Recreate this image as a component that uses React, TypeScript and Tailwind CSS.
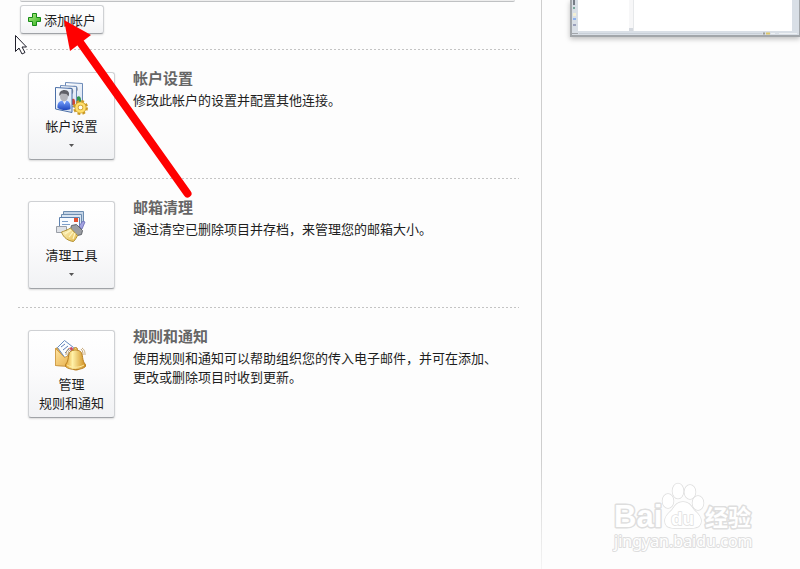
import type { ReactNode } from 'react';

const divider =
  'h-px bg-[repeating-linear-gradient(90deg,#c4c4c4_0px,#c4c4c4_2px,transparent_2px,transparent_4px)]';

const raised =
  'rounded-[3px] border border-[#cfd1d4] border-b-[#a0a3a7] bg-linear-to-b from-white via-[#fbfbfc] to-[#f1f2f4] shadow-[0_1px_2px_rgba(0,0,0,0.14)]';

function PlusIcon() {
  return (
    <svg width="14" height="14" viewBox="0 0 14 14" aria-hidden="true">
      <defs>
        <linearGradient id="plus" x1="0" y1="0" x2="1" y2="1">
          <stop offset="0" stopColor="#b5f08a" />
          <stop offset="1" stopColor="#2fae1c" />
        </linearGradient>
      </defs>
      <path d="M4.500 .5h4v4h4v4h-4v4h-4v-4h-4v-4h4z" fill="url(#plus)" stroke="#178a16" />
    </svg>
  );
}

function AccountsIcon() {
  return (
    <svg width="36" height="34" viewBox="1 0 36 34" aria-hidden="true">
      <defs>
        <linearGradient id="card" x1="0" y1="0" x2="1" y2="1">
          <stop offset="0" stopColor="#ffffff" />
          <stop offset="1" stopColor="#d5e0f1" />
        </linearGradient>
        <linearGradient id="shirt" x1="0" y1="0" x2="0" y2="1">
          <stop offset="0" stopColor="#79a4ff" />
          <stop offset="1" stopColor="#1d45bd" />
        </linearGradient>
      </defs>
      <path d="M12.500 1.500l17 1v22l-17-3z" fill="url(#card)" stroke="#6d8bb8" />
      <path d="M20 5c4-1 5 1 5 4l-2 3z" fill="#a4a8b0" />
      <path d="M24 16c2-2 4 0 4 3v3h-4z" fill="#33964c" />
      <path d="M7.500 4.500l16 1v21l-16-3z" fill="url(#card)" stroke="#6d8bb8" />
      <path d="M15 7c4-1 6 1 5 5l-2 3z" fill="#8a8f99" />
      <path d="M19 18c2-1 3 0 3 3v3h-3z" fill="#d04637" />
      <path d="M2.500 6.500l16.500 1v24l-16.500-3.500z" fill="url(#card)" stroke="#4b6fa8" />
      <path d="M4.500 27c-.5-5 2-7 5-7.500l2 1 2-1c3 1 4.500 4 4 8.500-4 2-10 1-13-1z" fill="url(#shirt)" />
      <path d="M9.500 19.500l2 4 2-4z" fill="#e9f0ff" />
      <ellipse cx="11" cy="15.500" rx="4" ry="5" fill="#b5b5ba" />
      <path d="M6.500 15c-1-4 2-6 5-6 4 0 5.500 3 4 6.500l-2-2.500-5-.5z" fill="#606066" />
      <circle cx="27.500" cy="26.500" r="6" fill="none" stroke="#cb9a26" strokeWidth="3" strokeDasharray="2.600 2.110" />
      <circle cx="27.500" cy="26.500" r="4" fill="#fffdf0" stroke="#cb9a26" strokeWidth="4" />
      <circle cx="27.500" cy="26.500" r="4" fill="none" stroke="#ffdf6b" strokeWidth="2.500" />
    </svg>
  );
}

function CleanupIcon() {
  return (
    <svg width="36" height="34" viewBox="1 0 36 34" aria-hidden="true">
      <defs>
        <linearGradient id="straw" x1="0" y1="0" x2="1" y2="1">
          <stop offset="0" stopColor="#fffbd0" />
          <stop offset="1" stopColor="#e5b948" />
        </linearGradient>
      </defs>
      <path d="M10.500 1.500h20v13h-20z" fill="#c4d4e6" stroke="#6d8db0" />
      <path d="M8.500 4.500h20v12h-20z" fill="#d9e5f2" stroke="#6d8db0" />
      <path d="M6.500 7.500h20v13h-20z" fill="#f8fbff" stroke="#5e82af" />
      <path d="M9 11.500h6M9 14.500h8" stroke="#7d9fca" />
      <path d="M21 8h4v4h-4z" fill="#e5502e" />
      <path d="M3.500 16.500h10v6h-10z" fill="#dfe2e7" stroke="#9a9fa7" />
      <path d="M26 16l4-5 2 1-3 7z" fill="#a3a2e0" stroke="#6869b4" strokeWidth=".8" />
      <path d="M18.500 15.500l5-1 6 6-1 4-4 1-7-6z" fill="#9a9da3" stroke="#62656b" />
      <path d="M17.500 18c-3 2-6 3-9 4 2 6 7 9 12 9.500 2-2 3-4 4-6z" fill="url(#straw)" stroke="#b39235" />
      <path d="M18 20l-6 4m8-2l-4 5m6-4l-2 6" stroke="#fff7c2" strokeWidth="1.200" />
    </svg>
  );
}

function RulesIcon() {
  return (
    <svg width="36" height="34" viewBox="1 0 36 34" aria-hidden="true">
      <defs>
        <linearGradient id="folder" x1="0" y1="0" x2="1" y2="1">
          <stop offset="0" stopColor="#ffe4a1" />
          <stop offset="1" stopColor="#e5ad46" />
        </linearGradient>
        <linearGradient id="bell" x1="0" y1="0" x2="1" y2="0">
          <stop offset="0" stopColor="#e2a02c" />
          <stop offset=".35" stopColor="#fff1a8" />
          <stop offset="1" stopColor="#cf8d1c" />
        </linearGradient>
      </defs>
      <path d="M2.500 9.500l8-3 10 7v14l-18-1z" fill="#e0ab50" stroke="#c3903f" />
      <path d="M4.500 8.500l7-7 9 7-8 11z" fill="#fafdff" stroke="#668cc0" />
      <path d="M8 8l4-3m-2 6l5-4m-3 7l4-4" stroke="#5f7db7" />
      <path d="M16 9l3-1 1 3-2 1z" fill="#cf4268" />
      <path d="M2.500 9.500l9 9 8-4v13l-17-1z" fill="url(#folder)" stroke="#d2a04d" />
      <path d="M15 16c0-3 1-5 3-6m-5 6c0-3 1-5 3-7m13 0c3 2 3 5 3 7m-4-6c2 2 2 4 2 6" fill="none" stroke="#bf9c62" strokeWidth=".9" />
      <ellipse cx="23" cy="28.500" rx="4" ry="3" fill="#b9771b" />
      <circle cx="22.500" cy="10.500" r="2" fill="#f7d068" stroke="#b7832a" />
      <path d="M12.500 25.500c4-4 2-11 5-13 3-2 7-2 10 0 3 3 1 9 5 13v2c-4 4-16 4-20 0z" fill="url(#bell)" stroke="#b98022" />
      <path d="M14 26c5 3 12 3 17 0" fill="none" stroke="#ffeaa0" />
    </svg>
  );
}

function Section(props: {
  icon: ReactNode;
  label: ReactNode;
  menu?: boolean;
  title: string;
  children: ReactNode;
}) {
  return (
    <section>
      <div className={divider} />
      <div className="flex gap-[18px] pt-[22px] pb-[18px] pl-[10px]">
        <button
          type="button"
          className={`flex h-[88px] w-[87px] flex-none flex-col items-center pt-2 text-[13px] leading-[19px] ${raised}`}
        >
          {props.icon}
          <span className="mt-px">{props.label}</span>
          {props.menu && (
            <svg className="mt-[9px]" width="5" height="3" viewBox="0 0 5 3" aria-hidden="true">
              <path d="M0 0h5L2.500 3z" fill="#555" />
            </svg>
          )}
        </button>
        <div className="-mt-0.5">
          <h2 className="text-[15px] leading-[16px] font-bold text-[#666]">{props.title}</h2>
          <p className="mt-1 text-[13px] leading-[19px]">{props.children}</p>
        </div>
      </div>
    </section>
  );
}

function Preview() {
  return (
    <div className="ml-[28px] h-[37px] border-r border-b-2 border-l-2 border-[#a2a6aa] bg-[#d9dfe6] shadow-[0_2px_5px_rgba(0,0,0,0.25)]">
      <svg className="block" width="100%" height="35" aria-hidden="true">
        <rect x="6" width="214" height="31" fill="#fff" />
        <path d="M57 0h4v31h-4z" fill="#f7f7f8" />
        <path d="M61.500 0v31" stroke="#e6e8ea" />
        <path d="M57 28h4v3h-4z" fill="#d5d9df" />
        <path d="M1 0h2v5H1z" fill="#767c86" />
        <path d="M1 7h2v2H1z" fill="#79a89b" />
        <path d="M1 13h3v3H1z" fill="#f4f0d4" />
        <path d="M1 18h3v2H1z" fill="#8eb3ef" />
        <path d="M1 24h3v2H1z" fill="#9aa0bb" />
        <path d="M0 33.500h6" stroke="#a2a6ab" />
        <path d="M7 33.500h183" stroke="#c9d0d8" />
        <path d="M191 33.500h2" stroke="#9b9c98" strokeWidth="2" />
        <path d="M194 33.500h4" stroke="#ddc66b" strokeWidth="2" />
        <path d="M199 33.500h4m4 0h18" stroke="#eef1f4" />
      </svg>
    </div>
  );
}

function Watermark() {
  return (
    <svg
      className="mb-[14px] ml-[70px]"
      width="148"
      height="74"
      viewBox="0 0 148 74"
      fill="#fff"
      stroke="#dedede"
      strokeWidth="1.500"
      paintOrder="stroke"
      strokeLinejoin="round"
      role="img"
      aria-label="Baidu 经验 jingyan.baidu.com"
    >
      <g fontFamily="'Liberation Sans', 'Noto Sans CJK SC', sans-serif" fontWeight="700">
        <text x="2" y="46" fontSize="31" strokeWidth="3">Bai</text>
        <ellipse cx="56" cy="20" rx="5.500" ry="7" />
        <ellipse cx="66" cy="10" rx="5.500" ry="7.500" />
        <ellipse cx="78" cy="11" rx="5.500" ry="7" />
        <ellipse cx="86" cy="22" rx="5.500" ry="7" />
        <path d="M71 21c6 0 8 4 11 8 3 3 7 6 7 11 0 5-4 7-9 7H62c-5 0-9-2-9-7 0-5 4-8 7-11 3-4 5-8 11-8z" />
        <text x="59" y="44" fontSize="19">du</text>
        <text x="93" y="45" fontSize="23" strokeWidth="3" fontFamily="'Noto Sans CJK SC', sans-serif">经验</text>
      </g>
      <text x="2" y="66" fontSize="16" strokeWidth="2" fontFamily="'Noto Sans', sans-serif">
        jingyan.baidu.com
      </text>
    </svg>
  );
}

export default function App() {
  return (
    <div className="relative flex min-h-screen overflow-hidden bg-[#fdfdfd] font-['Noto_Sans_CJK_SC','Liberation_Sans',sans-serif] text-[#1e1e1e]">
      <main className="min-w-0 flex-1 pr-[22px] pl-[18px]">
        <div className="mr-1 ml-[2px] h-[2px] rounded-b-[3px] border-b border-[#bfc1c3] bg-[#eee]" />
        <button
          type="button"
          className={`mt-[3px] mb-[15px] ml-[2px] flex h-[29px] w-[84px] items-center gap-[2px] pl-[7px] text-[13px] leading-[19px] whitespace-nowrap ${raised}`}
        >
          <PlusIcon />
          添加帐户
        </button>
        <Section icon={<AccountsIcon />} label="帐户设置" menu title="帐户设置">
          修改此帐户的设置并配置其他连接。
        </Section>
        <Section icon={<CleanupIcon />} label="清理工具" menu title="邮箱清理">
          通过清空已删除项目并存档，来管理您的邮箱大小。
        </Section>
        <Section icon={<RulesIcon />} label={<>管理<br />规则和通知</>} title="规则和通知">
          使用规则和通知可以帮助组织您的传入电子邮件，并可在添加、
          <br />
          更改或删除项目时收到更新。
        </Section>
      </main>
      <div className="w-px flex-none bg-linear-to-b from-[#cecece] from-80% to-[#f4f4f4]" />
      <aside className="flex w-[258px] flex-none flex-col justify-between">
        <Preview />
        <Watermark />
      </aside>
      <svg className="pointer-events-none absolute top-0 left-0" width="200" height="210" aria-hidden="true">
        <path d="M15.500 35.500v16l3.500-3.500 3 6 3-1.500-3-5.500h4.500z" fill="#fff" stroke="#20202c" strokeLinejoin="round" />
        <path d="M77 38L187.500 193.500" stroke="#f00" strokeWidth="8" strokeLinecap="round" />
        <path d="M64 20L91 35 70 51z" fill="#f00" />
      </svg>
    </div>
  );
}
